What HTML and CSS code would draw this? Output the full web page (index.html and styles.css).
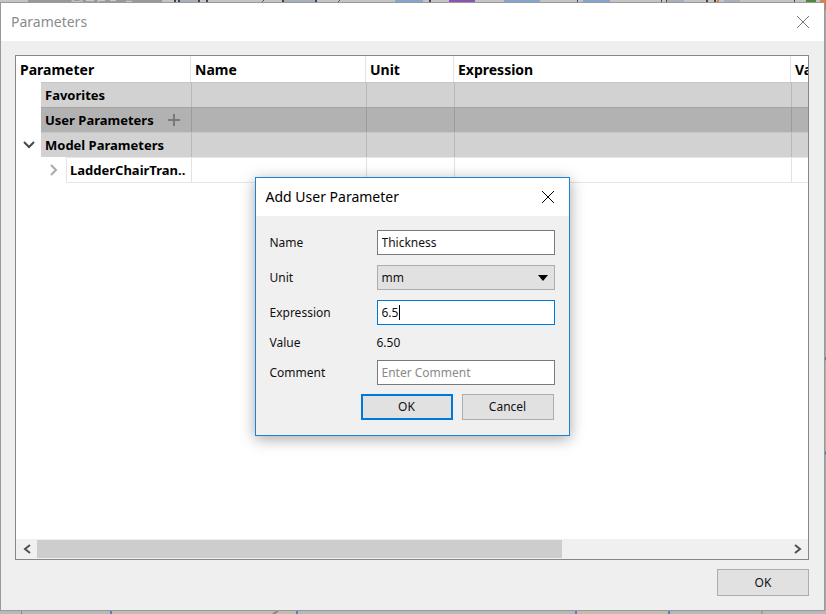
FILE: index.html
```html
<!DOCTYPE html>
<html lang="en">
<head>
<meta charset="utf-8">
<title>Parameters</title>
<link rel="stylesheet" href="styles.css">
</head>
<body>
<div class="desktop">
  <svg class="strip strip-top" viewBox="0 0 826 3" preserveAspectRatio="none" aria-hidden="true">
    <rect width="826" height="3" fill="#c4c4c4"/>
    <rect x="28" width="134" height="3" fill="#999"/>
    <path d="M72 3V1l5 2 5-2v2M86 1h8M98 3V1h7M110 1h6M126 2h6" stroke="#ddd" fill="none"/>
    <path d="M174 0h2v3h-2zM178 0h2v3h-2zM198 0h2v3h-2zM206 0h2v3h-2zM282 0h2v3h-2zM315 0h2v3h-2zM429 0h2v3h-2zM577 0h1v3h-1zM661 0h1v3h-1zM666 0h1v3h-1zM706 0h2v3h-2zM714 0h2v3h-2zM794 0h1v3h-1z" fill="#444"/>
    <path d="M262 3l2-3M338 3l2-3" stroke="#444"/>
    <path d="M180 0h18v3h-18zM284 0h31v3h-31zM667 0h17v3h-17zM724 0h16v3h-16z" fill="#a8b0bf"/>
    <path d="M395 0h28v3h-28zM504 0h36v3h-36zM583 0h27v3h-27z" fill="#86a5d0"/>
    <path d="M449 0h26v3h-26z" fill="#8a55ad"/>
    <path d="M717 0h2v3h-2zM820 0h6v3h-6z" fill="#dc8142"/>
    <path d="M806 0h10v3h-10z" fill="#4e8a3c"/>
  </svg>
  <main class="window">
    <header class="titlebar">
      <h1>Parameters</h1>
      <button class="close" type="button" aria-label="Close"><svg width="14" height="14" viewBox="0 0 14 14"><path d="M1 1l12 12M13 1L1 13"/></svg></button>
    </header>
    <section class="content">
      <div class="frame">
        <div class="viewport">
          <table>
            <colgroup><col class="c-indent"><col class="c-indent"><col class="c-label"><col class="c-name"><col class="c-unit"><col class="c-expr"><col class="c-value"></colgroup>
            <thead><tr><th colspan="3">Parameter</th><th>Name</th><th>Unit</th><th>Expression</th><th>Value</th></tr></thead>
            <tbody>
              <tr class="group"><td class="gutter"></td><th colspan="2">Favorites</th><td></td><td></td><td></td><td></td></tr>
              <tr class="group selected"><td class="gutter"></td><th colspan="2"><span class="label">User Parameters<button class="plain" type="button" aria-label="Add user parameter"><svg width="13" height="13" viewBox="0 0 13 13"><path d="M6 0v12M0 6h12" stroke="#787878" stroke-width="2"/></svg></button></span></th><td></td><td></td><td></td><td></td></tr>
              <tr class="group"><td class="gutter"><button class="plain" type="button" aria-label="Collapse"><svg width="12" height="8" viewBox="0 0 12 8"><path d="M1 1l5 5 5-5" fill="none" stroke="#484848" stroke-width="2"/></svg></button></td><th colspan="2">Model Parameters</th><td></td><td></td><td></td><td></td></tr>
              <tr class="item"><td class="gutter"></td><td class="gutter"><button class="plain" type="button" aria-label="Expand"><svg width="8" height="12" viewBox="0 0 8 12"><path d="M1 1l5 5-5 5" fill="none" stroke="#aaa" stroke-width="2"/></svg></button></td><th>LadderChairTran..</th><td></td><td></td><td></td><td></td></tr>
            </tbody>
          </table>
        </div>
        <div class="scrollbar">
          <button class="plain" type="button" aria-label="Scroll left"><svg width="8" height="10" viewBox="0 0 8 10"><path d="M7 1L2 5l5 4" fill="none" stroke="#505050" stroke-width="2"/></svg></button>
          <div class="track"><div class="thumb"></div></div>
          <button class="plain" type="button" aria-label="Scroll right"><svg width="8" height="10" viewBox="0 0 8 10"><path d="M1 1l5 4-5 4" fill="none" stroke="#505050" stroke-width="2"/></svg></button>
        </div>
      </div>
      <footer class="actions"><button class="button" type="button">OK</button></footer>
    </section>
  </main>
  <svg class="strip strip-side" viewBox="0 0 1 607" preserveAspectRatio="none" aria-hidden="true">
    <rect width="1" height="607" fill="#aaa"/><path d="M0 0h1v8h-1z" fill="#c87848"/><path d="M0 355h1v93h-1z" fill="#b5aea2"/><path d="M0 354h1v3h-1zM0 448h1v3h-1z" fill="#5874b5"/>
  </svg>
  <svg class="strip strip-bottom" viewBox="0 0 826 3" preserveAspectRatio="none" aria-hidden="true">
    <rect width="826" height="3" fill="#b8b8b8"/>
    <path d="M112 0h184v3H112zM577 0h91v3h-91z" fill="#c5bcaf"/>
    <path d="M110 0h2v3h-2zM296 0h2v3h-2zM575 0h2v3h-2zM668 0h2v3h-2z" fill="#5c7ccd"/>
    <path d="M21 0h1v3h-1z" fill="#888"/><path d="M761 0h2v3h-2z" fill="#79bb79"/>
    <path d="M273 3l5-3" stroke="#888" stroke-width="2"/>
  </svg>
  <div class="overlay">
    <form class="dialog" role="dialog" aria-labelledby="dialog-title">
      <header class="titlebar">
        <h2 id="dialog-title">Add User Parameter</h2>
        <button class="close" type="button" aria-label="Close"><svg width="14" height="14" viewBox="0 0 14 14"><path d="M1 1l12 12M13 1L1 13"/></svg></button>
      </header>
      <div class="fields">
        <label for="name">Name</label><input id="name" type="text" value="Thickness">
        <label for="unit">Unit</label>
        <div class="select"><select id="unit"><option>mm</option></select><svg width="10" height="6" viewBox="0 0 10 6"><path d="M0 0h10L5 6z"/></svg></div>
        <label for="expression">Expression</label>
        <div class="active"><input id="expression" type="text" value="6.5"><span class="caret"></span></div>
        <label for="value">Value</label><output id="value">6.50</output>
        <label for="comment">Comment</label><input id="comment" type="text" placeholder="Enter Comment">
      </div>
      <footer class="buttons"><button class="button primary" type="button">OK</button><button class="button" type="button">Cancel</button></footer>
    </form>
  </div>
</div>
</body>
</html>
```
FILE: styles.css
```css
* { box-sizing: border-box; }

body {
  margin: 0;
  font: 12px/15px "Noto Sans", sans-serif;
  color: #111;
}

button, input, select { font: inherit; color: inherit; margin: 0; }
svg { display: block; }

.desktop {
  position: relative;
  display: grid;
  grid-template: 2px minmax(0, 1fr) 3px / minmax(0, 1fr) 1px;
  height: 100vh;
  overflow: hidden;
}

.strip { width: 100%; height: 100%; }
.strip-top, .strip-bottom { grid-column: 1 / -1; }

.window {
  display: flex;
  flex-direction: column;
  border: 1px solid #999;
  background: #efefef;
}

.titlebar {
  display: flex;
  align-items: center;
  justify-content: space-between;
  height: 38px;
  padding: 0 14px 0 10px;
  background: #fff;
}

.titlebar h1, .titlebar h2 { margin: 0; font-size: 14px; line-height: 20px; font-weight: 400; }
.titlebar h1 { color: #8c8c8c; }
.titlebar h2 { color: #000; }

.close, .plain { display: block; padding: 0; border: 0; background: none; }
.close path { stroke: #000; fill: none; }
.window .close path { stroke: #777; }

.content {
  flex: 1;
  display: flex;
  flex-direction: column;
  min-height: 0;
  padding: 14px 15px 14px 14px;
}

.frame {
  flex: 1;
  display: flex;
  flex-direction: column;
  min-height: 0;
  border: 1px solid #828790;
  background: #fff;
}

.viewport { flex: 1; min-height: 0; overflow: hidden; }

table { width: 875px; table-layout: fixed; border-collapse: separate; border-spacing: 0; }
.c-indent { width: 25px; }
.c-label { width: 125px; }
.c-name { width: 175px; }
.c-unit { width: 88px; }
.c-expr { width: 337px; }
.c-value { width: 100px; }

th, td { height: 25px; padding: 0 4px; text-align: left; white-space: nowrap; color: #000; }
thead th { height: 26px; font-size: 14px; border-right: 1px solid #e2e2e2; }
tbody th { padding: 0 0 0 4px; font-size: 13px; }
tbody td { border-left: 1px solid #e2e2e2; }
tbody .gutter { padding: 0; border: 0; background: #fff; }
.gutter .plain { margin: 0 auto; }
.group th, .group td { background: #d2d2d2; border-top: 1px solid #c6c6c6; }
.group td { border-left-color: #b8b8b8; }
.group.selected th, .group.selected td { background: #b2b2b2; border-top-color: #a4a4a4; }
.group.selected td { border-left-color: #9c9c9c; }
.group .gutter, .group.selected .gutter { background: #fff; border: 0; }
.item th, .item td { height: 26px; border-top: 1px solid #e6e6e6; border-bottom: 1px solid #e6e6e6; }
.item .gutter { border: 0; }
.item th { border-left: 1px solid #e6e6e6; padding-left: 3px; }
.label { display: flex; align-items: center; gap: 14px; }

.scrollbar { display: flex; align-items: center; height: 20px; background: #f0f0f0; }
.scrollbar .plain { display: grid; place-items: center; width: 21px; height: 20px; }
.track { flex: 1; height: 18px; }
.thumb { width: 70%; height: 100%; background: #cdcdcd; }

.actions { display: flex; justify-content: flex-end; padding-top: 9px; }

.button { width: 92px; height: 27px; padding: 0; border: 1px solid #adadad; background: #e1e1e1; }
.button.primary { border: 2px solid #0078d7; }

.overlay { position: absolute; inset: 0 2px 2px 0; display: grid; place-items: center; }

.dialog {
  width: 315px;
  border: 1px solid #1883d7;
  background: #f0f0f0;
  box-shadow: 0 3px 14px rgba(0, 0, 0, 0.35);
}

.fields {
  display: grid;
  grid-template-columns: 107px minmax(0, 1fr);
  gap: 10px 0;
  align-items: center;
  padding: 14px 14px 9px;
}

.fields input, .fields select {
  display: block;
  width: 100%;
  height: 25px;
  padding: 0 4px;
  border: 1px solid #7a7a7a;
  border-radius: 0;
  background: #fff;
}

.fields input::placeholder { color: #8a8a8a; opacity: 1; }
.select, .active { position: relative; }
.fields select { appearance: none; border-color: #adadad; background: #e1e1e1; }
.select svg { position: absolute; top: 10px; right: 7px; pointer-events: none; }
.fields .active input { border-color: #0078d7; }
.caret { position: absolute; top: 5px; left: 22px; width: 1px; height: 15px; background: #000; }

.buttons { display: flex; justify-content: flex-end; gap: 9px; padding: 0 15px 15px; }
.buttons .button { height: 26px; }
```
